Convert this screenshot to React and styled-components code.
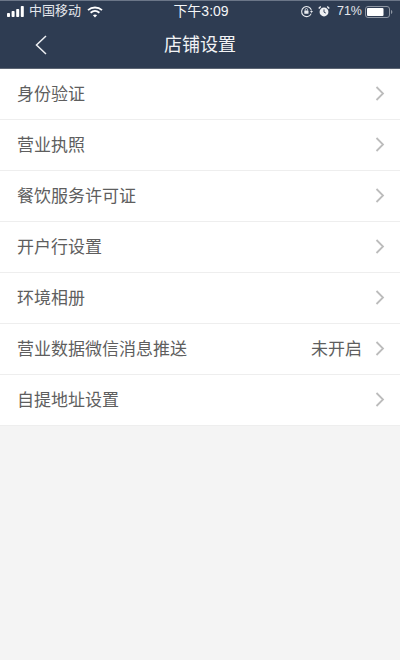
import React from 'react';
import styled, { createGlobalStyle } from 'styled-components';

const GlobalStyle = createGlobalStyle`
  html, body {
    margin: 0;
    padding: 0;
    background: #f4f4f4;
  }
  * {
    box-sizing: border-box;
  }
`;

const Page = styled.div`
  width: 400px;
  height: 660px;
  overflow: hidden;
  background: #f4f4f4;
  font-family: "Liberation Sans", "Noto Sans CJK SC", sans-serif;
`;

const Header = styled.header`
  height: 69px;
  background: #2e3c52;
  border-top: 1px solid #6b7688;
  border-bottom: 1px solid #5c6573;
  color: #fff;
`;

const StatusBar = styled.div`
  height: 21px;
  display: grid;
  grid-template-columns: 1fr auto 1fr;
  align-items: center;
  padding: 0 7px;
  font-size: 13px;
  line-height: 16px;
`;

const StatusGroup = styled.div`
  display: flex;
  align-items: center;
  justify-content: ${(p) => (p.$end ? 'flex-end' : 'flex-start')};
`;

const StatusText = styled.span`
  display: block;
  height: 16px;
  margin-top: -2px;
  padding-bottom: 2px;
  color: #e4e7ec;
`;

const Carrier = styled(StatusText)`
  margin-left: 3px;
  margin-right: 6px;
`;

const Clock = styled(StatusText)`
  margin-left: 2px;
  font-size: 14px;
  color: #f4f5f7;
`;

const Percent = styled(StatusText)`
  margin-left: 7px;
  margin-right: 3px;
  font-size: 12.5px;
`;

const NavBar = styled.div`
  height: 46px;
  display: flex;
  align-items: center;
  justify-content: center;
  position: relative;
`;

const BackIcon = styled.svg`
  position: absolute;
  left: 35px;
  top: 13px;
`;

const Title = styled.h1`
  margin: 0;
  font-size: 18px;
  line-height: 24px;
  font-weight: 400;
  color: #f2f3f5;
`;

const List = styled.div`
  background: #fff;
`;

const Row = styled.div`
  height: 51px;
  padding: 0 15px 0 17px;
  display: flex;
  align-items: center;
  border-bottom: 1px solid #eeeeee;
`;

const Label = styled.span`
  flex: 1;
  font-size: 17px;
  line-height: 22px;
  padding-top: 1px;
  color: #5e5e5e;
`;

const Value = styled.span`
  font-size: 17px;
  line-height: 22px;
  padding-top: 1px;
  color: #5e5e5e;
  margin-right: 13px;
`;

const Chevron = styled.svg`
  flex: none;
  display: block;
  margin-bottom: 2px;
`;

const LockIcon = styled.svg`
  margin-right: 5px;
`;

const SignalIcon = () => (
  <svg width="19" height="11" viewBox="0 0 19 11">
    <rect x="0" y="7" width="3" height="4" rx="0.8" fill="#fff" />
    <rect x="4.6" y="5" width="3" height="6" rx="0.8" fill="#fff" />
    <rect x="9.2" y="3" width="3" height="8" rx="0.8" fill="#fff" />
    <rect x="13.8" y="0" width="3" height="11" rx="0.8" fill="#fff" />
  </svg>
);

const WifiIcon = () => (
  <svg width="16" height="12" viewBox="0 0 16 12" fill="none" stroke="#fff" strokeWidth="1.8">
    <path d="M1 4.2C5 .6 11 .6 15 4.2" />
    <path d="M3.6 6.8c2.6-2.2 6.2-2.2 8.8 0" />
    <path d="M8 11.5 5.9 9.2c1.2-1 3-1 4.2 0Z" fill="#fff" stroke="none" />
  </svg>
);

const AlarmIcon = () => (
  <svg width="12" height="13" viewBox="0 0 13 13" fill="none">
    <circle cx="6.5" cy="7" r="4.8" fill="#eef0f3" />
    <path d="M6.5 4.2v3l2 1" stroke="#2e3c52" strokeWidth="1" />
    <path d="M.8 3.2 3 1M12.2 3.2 10 1" stroke="#eef0f3" strokeWidth="1.5" />
  </svg>
);

const BatteryIcon = () => (
  <svg width="28" height="12" viewBox="0 0 28 12" fill="none">
    <rect x="0.5" y="0.5" width="24" height="11" rx="2.5" stroke="#8f97a4" />
    <rect x="2" y="2" width="16.5" height="8" rx="1" fill="#fff" />
    <path d="M26 4v4c.8-.2 1.3-1 1.3-2s-.5-2-1.3-2Z" fill="#8f97a4" />
  </svg>
);

const items = [
  { label: '身份验证' },
  { label: '营业执照' },
  { label: '餐饮服务许可证' },
  { label: '开户行设置' },
  { label: '环境相册' },
  { label: '营业数据微信消息推送', value: '未开启' },
  { label: '自提地址设置' },
];

const App = () => (
  <Page>
    <GlobalStyle />
    <Header>
      <StatusBar>
        <StatusGroup>
          <SignalIcon />
          <Carrier>中国移动</Carrier>
          <WifiIcon />
        </StatusGroup>
        <Clock>下午3:09</Clock>
        <StatusGroup $end>
          <LockIcon width="13" height="13" viewBox="0 0 13 13" fill="none">
            <path d="M11.2 8.6A5 5 0 1 1 11.5 5.5" stroke="#e8eaee" strokeWidth="1.1" />
            <path d="M10 6h3l-1.5 2Z" fill="#e8eaee" />
            <rect x="4.3" y="5.6" width="4.2" height="3.2" rx="0.5" fill="#e8eaee" />
            <path d="M5.2 5.6V4.7a1.2 1.2 0 0 1 2.4 0v.9" stroke="#e8eaee" strokeWidth="0.8" />
          </LockIcon>
          <AlarmIcon />
          <Percent>71%</Percent>
          <BatteryIcon />
        </StatusGroup>
      </StatusBar>
      <NavBar>
        <BackIcon width="12" height="20" viewBox="0 0 12 20" fill="none" stroke="#eef0f3" strokeWidth="1.5">
          <path d="M11 1 1.500 10 11 19" />
        </BackIcon>
        <Title>店铺设置</Title>
      </NavBar>
    </Header>
    <List>
      {items.map((item) => (
        <Row key={item.label}>
          <Label>{item.label}</Label>
          {item.value && <Value>{item.value}</Value>}
          <Chevron width="10" height="15" viewBox="0 0 10 15" fill="none" stroke="#bcbcbc" strokeWidth="1.8">
            <path d="M1.500 1 8 7.500 1.500 14" />
          </Chevron>
        </Row>
      ))}
    </List>
  </Page>
);

export default App;
